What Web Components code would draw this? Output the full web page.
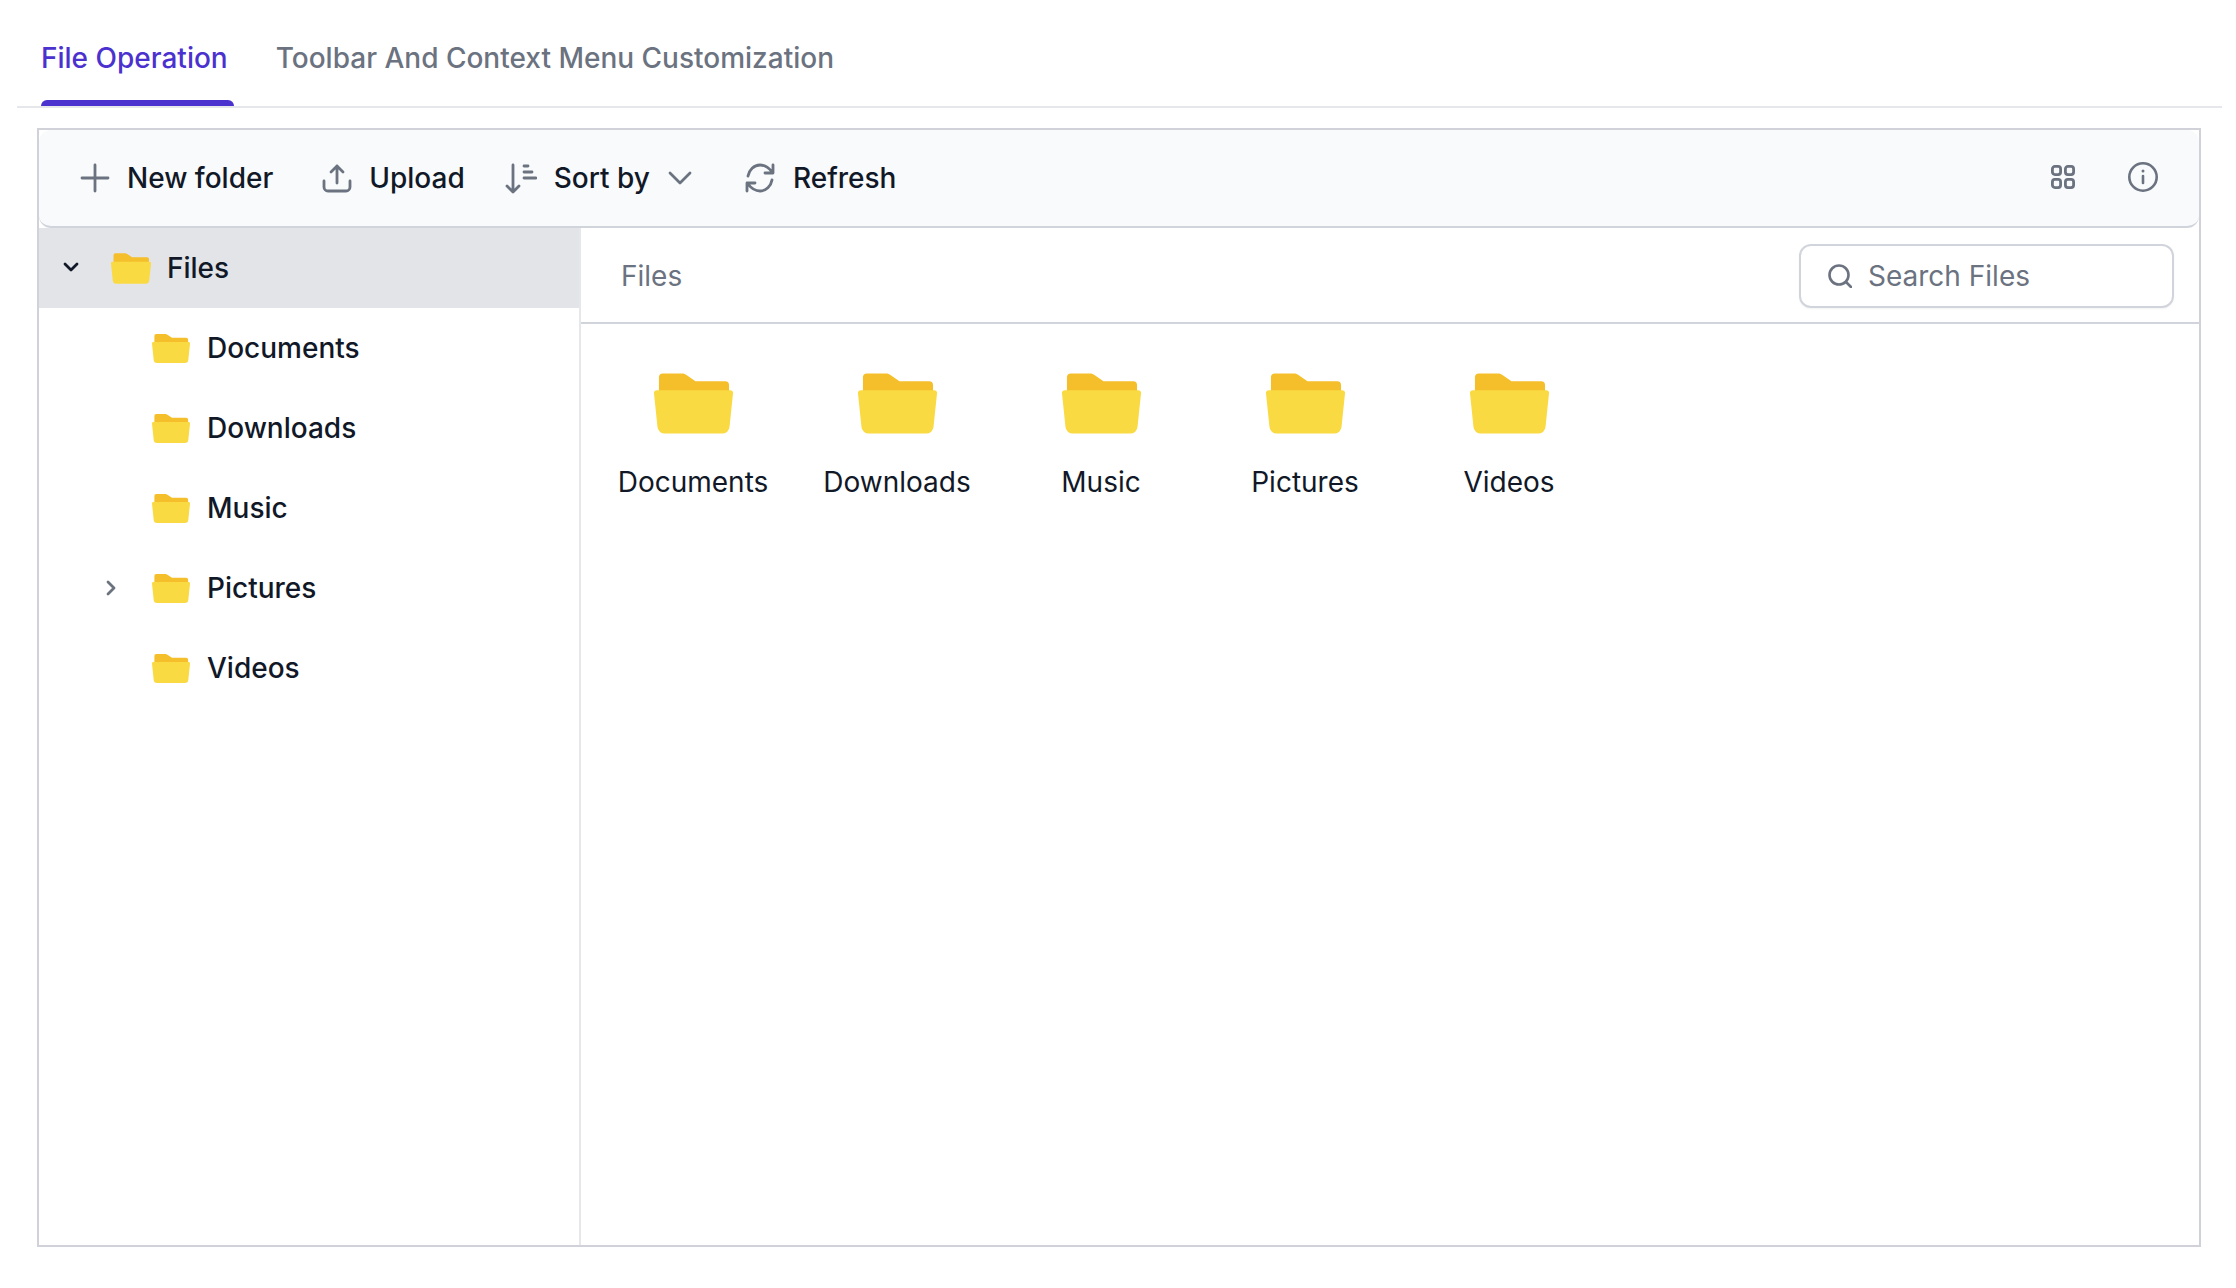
<!DOCTYPE html>
<html>
<head>
<meta charset="utf-8">
<title>File Manager</title>
<style>
    html, body { margin: 0; background: #fff; }
    body { font-family: Inter, "Liberation Sans", sans-serif; color: #111827; }
</style>
</head>
<body>
<file-tabs>
    <tab-item active>File Operation</tab-item>
    <tab-item>Toolbar And Context Menu Customization</tab-item>
</file-tabs>
<file-manager>
    <tool-button slot="toolbar" icon="plus" style="margin-left:41px">New folder</tool-button>
    <tool-button slot="toolbar" icon="upload" style="margin-left:49px">Upload</tool-button>
    <tool-button slot="toolbar" icon="sort" caret style="margin-left:40px">Sort by</tool-button>
    <tool-button slot="toolbar" icon="refresh" style="margin-left:52px">Refresh</tool-button>
    <tree-row slot="tree" level="0" caret="down" selected>Files</tree-row>
    <tree-row slot="tree" level="1">Documents</tree-row>
    <tree-row slot="tree" level="1">Downloads</tree-row>
    <tree-row slot="tree" level="1">Music</tree-row>
    <tree-row slot="tree" level="1" caret="right">Pictures</tree-row>
    <tree-row slot="tree" level="1">Videos</tree-row>
    <file-tile slot="tiles">Documents</file-tile>
    <file-tile slot="tiles">Downloads</file-tile>
    <file-tile slot="tiles">Music</file-tile>
    <file-tile slot="tiles">Pictures</file-tile>
    <file-tile slot="tiles">Videos</file-tile>
</file-manager>

<script>
const ICONS = {
    plus: '<svg width="30" height="30" viewBox="0 0 30 30" fill="none" stroke="#6b7280" stroke-width="2.8" stroke-linecap="round"><path d="M15 2v26M2 15h26"/></svg>',
    upload: '<svg width="30" height="30" viewBox="0 0 30 30" fill="none" stroke="#6b7280" stroke-width="2.8" stroke-linecap="round" stroke-linejoin="round"><path d="M15 20V3M9 9l6-6 6 6M2 18v6a4 4 0 0 0 4 4h18a4 4 0 0 0 4-4v-6"/></svg>',
    sort: '<svg width="32" height="32" viewBox="0 0 32 32" fill="none" stroke="#6b7280" stroke-width="2.8" stroke-linecap="round" stroke-linejoin="round"><path d="M8 3v27M2 24l6 6 6-6M19 4h4M19 10h8M19 16h12"/></svg>',
    refresh: '<svg width="32" height="32" viewBox="0 0 32 32" fill="none" stroke="#6b7280" stroke-width="2.8" stroke-linecap="round" stroke-linejoin="round"><path d="M4 14C5 8 10 3 16 3c5 0 9 3 12 7M29 3v8h-8M28 18c-1 6-6 11-12 11-5 0-9-3-12-7M3 29v-8h8"/></svg>',
    chevron: '<svg width="24" height="14" viewBox="0 0 24 14" fill="none" stroke="#6b7280" stroke-width="2.8" stroke-linecap="round" stroke-linejoin="round"><path d="M2 2l10 10L22 2"/></svg>',
    folder: '<svg width="100%" height="100%" viewBox="0 0 80 61"><path d="M5 4a4 4 0 0 1 4-4h19c2 0 3 .5 4.500 1.500L42 8h30a4 4 0 0 1 4 4v10H5z" fill="#f5bf2b"/><path d="M3 17h74a3 3 0 0 1 3 3.300L76.500 54a7.500 7.500 0 0 1-7.500 7H11a7.500 7.500 0 0 1-7.500-7L0 20.300A3 3 0 0 1 3 17z" fill="#fada43"/></svg>'
};

class FileTabs extends HTMLElement {
    constructor() {
        super();
        this.attachShadow({ mode: 'open' });
    }

    connectedCallback() {
        this.shadowRoot.innerHTML = `
            <style>
                :host {
                    display: flex;
                    height: 106px;
                    margin: 0 14px 0 17px;
                    padding-left: 24px;
                    gap: 42px;
                    border-bottom: 2px solid #e5e7eb;
                }
            </style>
            <slot></slot>
        `;
    }
}

class TabItem extends HTMLElement {
    constructor() {
        super();
        this.attachShadow({ mode: 'open' });
    }

    connectedCallback() {
        this.shadowRoot.innerHTML = `
            <style>
                :host {
                    display: block;
                    position: relative;
                    height: 106px;
                    box-sizing: border-box;
                    padding-top: 41px;
                    padding-right: 6px;
                    font-size: 28px;
                    line-height: 34px;
                    font-weight: 500;
                    color: #6b7280;
                    white-space: nowrap;
                }
                :host([active]) { color: #4b32cf; }
                :host([active])::after {
                    content: "";
                    position: absolute;
                    left: 0;
                    right: 0;
                    bottom: 0;
                    height: 6px;
                    background: #4b32cf;
                    border-radius: 6px 6px 0 0;
                }
            </style>
            <slot></slot>
        `;
    }
}

class FileManager extends HTMLElement {
    constructor() {
        super();
        this.attachShadow({ mode: 'open' });
    }

    connectedCallback() {
        this.shadowRoot.innerHTML = `
            <style>
                :host {
                    display: flex;
                    flex-direction: column;
                    box-sizing: border-box;
                    height: 1119px;
                    width: 2164px;
                    margin: 20px 0 0 37px;
                    border: 2px solid #d1d1d9;
                }
                .toolbar {
                    display: flex;
                    align-items: center;
                    flex: none;
                    height: 98px;
                    box-sizing: border-box;
                    background: #f9fafb;
                    border-bottom: 2px solid #d1d5db;
                    border-radius: 12px;
                }
                .right {
                    display: flex;
                    align-items: center;
                    margin-left: auto;
                    margin-right: 41px;
                    margin-bottom: 2px;
                    gap: 53px;
                }
                .right svg { display: block; }
                .body { display: flex; flex: 1; min-height: 0; }
                .tree {
                    width: 540px;
                    flex: none;
                    border-right: 2px solid #e5e7eb;
                }
                .main { flex: 1; min-width: 0; }
                .crumb {
                    display: flex;
                    align-items: center;
                    justify-content: space-between;
                    height: 96px;
                    box-sizing: border-box;
                    padding: 1px 25px 0 40px;
                    border-bottom: 2px solid #d1d5db;
                    font-size: 28px;
                    color: #6b7280;
                }
                .tiles {
                    display: flex;
                    padding: 49px 0 0 10px;
                }
            </style>
            <div class="toolbar">
                <slot name="toolbar"></slot>
                <div class="right">
                    <svg width="24" height="24" viewBox="0 0 24 24" fill="none" stroke="#6b7280" stroke-width="2.800">
                        <rect x="1.400" y="1.400" width="8.200" height="8.200" rx="2.500"/>
                        <rect x="14.400" y="1.400" width="8.200" height="8.200" rx="2.500"/>
                        <rect x="1.400" y="14.400" width="8.200" height="8.200" rx="2.500"/>
                        <rect x="14.400" y="14.400" width="8.200" height="8.200" rx="2.500"/>
                    </svg>
                    <svg width="30" height="30" viewBox="0 0 30 30" fill="none" stroke="#6b7280" stroke-width="2.600" stroke-linecap="round">
                        <circle cx="15" cy="15" r="13.700"/>
                        <path d="M15 14v7"/>
                        <path d="M15 9v.1" stroke-width="3"/>
                    </svg>
                </div>
            </div>
            <div class="body">
                <div class="tree"><slot name="tree"></slot></div>
                <div class="main">
                    <div class="crumb">
                        <span>Files</span>
                        <search-box></search-box>
                    </div>
                    <div class="tiles"><slot name="tiles"></slot></div>
                </div>
            </div>
        `;
    }
}

class ToolButton extends HTMLElement {
    constructor() {
        super();
        this.attachShadow({ mode: 'open' });
    }

    connectedCallback() {
        const caret = this.hasAttribute('caret') ? `<span class="caret">${ICONS.chevron}</span>` : '';
        this.shadowRoot.innerHTML = `
            <style>
                :host {
                    display: flex;
                    align-items: center;
                    gap: 17px;
                    font-size: 28px;
                    font-weight: 500;
                    color: #111827;
                    white-space: nowrap;
                }
                svg { display: block; }
                .caret { margin-left: 1px; }
            </style>
            ${ICONS[this.getAttribute('icon')]}
            <slot></slot>
            ${caret}
        `;
    }
}

class TreeRow extends HTMLElement {
    constructor() {
        super();
        this.attachShadow({ mode: 'open' });
    }

    connectedCallback() {
        const level = Number(this.getAttribute('level') || 0);
        const caret = this.getAttribute('caret');
        let arrow = '';
        if (caret === 'down') {
            arrow = '<path d="M3 5l6 6 6-6"/>';
        } else if (caret === 'right') {
            arrow = '<path d="M6 3l6 6-6 6"/>';
        }
        this.shadowRoot.innerHTML = `
            <style>
                :host {
                    display: flex;
                    align-items: center;
                    height: 80px;
                    box-sizing: border-box;
                    padding-left: ${23 + level * 40}px;
                    font-size: 28px;
                    font-weight: 500;
                    color: #111827;
                }
                :host([selected]) { background: #e2e4e8; }
                .arrow { flex: none; width: 18px; height: 18px; margin-right: ${level ? 32 : 31}px; display: block; }
                .folder { flex: none; width: ${level ? 38 : 40}px; height: 31px; margin-right: ${level ? 17 : 16}px; }
            </style>
            <svg class="arrow" viewBox="0 0 18 18" fill="none" stroke="${level ? '#6b7280' : '#111827'}" stroke-width="2.800" stroke-linecap="round" stroke-linejoin="round">${arrow}</svg>
            <span class="folder">${ICONS.folder}</span>
            <slot></slot>
        `;
    }
}

class FileTile extends HTMLElement {
    constructor() {
        super();
        this.attachShadow({ mode: 'open' });
    }

    connectedCallback() {
        this.shadowRoot.innerHTML = `
            <style>
                :host {
                    display: flex;
                    flex-direction: column;
                    align-items: center;
                    width: 204px;
                    font-size: 28px;
                    line-height: 34px;
                    color: #111827;
                }
                .folder { width: 79px; height: 61px; margin-bottom: 31px; }
            </style>
            <span class="folder">${ICONS.folder}</span>
            <slot></slot>
        `;
    }
}

class SearchBox extends HTMLElement {
    constructor() {
        super();
        this.attachShadow({ mode: 'open' });
    }

    connectedCallback() {
        this.shadowRoot.innerHTML = `
            <style>
                :host {
                    display: flex;
                    align-items: center;
                    gap: 16px;
                    width: 375px;
                    height: 64px;
                    box-sizing: border-box;
                    padding-left: 27px;
                    background: #fff;
                    border: 2px solid #d1d5db;
                    border-radius: 12px;
                    font-size: 28px;
                    color: #6b7280;
                    box-shadow: 0 1px 2px rgba(0, 0, 0, 0.05);
                }
                svg { display: block; flex: none; }
            </style>
            <svg width="24" height="24" viewBox="0 0 24 24" fill="none" stroke="#6b7280" stroke-width="2.600" stroke-linecap="round">
                <circle cx="11" cy="11" r="9.500"/>
                <path d="M18 18l5 5"/>
            </svg>
            <span>Search Files</span>
        `;
    }
}

customElements.define('file-tabs', FileTabs);
customElements.define('tab-item', TabItem);
customElements.define('file-manager', FileManager);
customElements.define('tool-button', ToolButton);
customElements.define('tree-row', TreeRow);
customElements.define('file-tile', FileTile);
customElements.define('search-box', SearchBox);
</script>
</body>
</html>
